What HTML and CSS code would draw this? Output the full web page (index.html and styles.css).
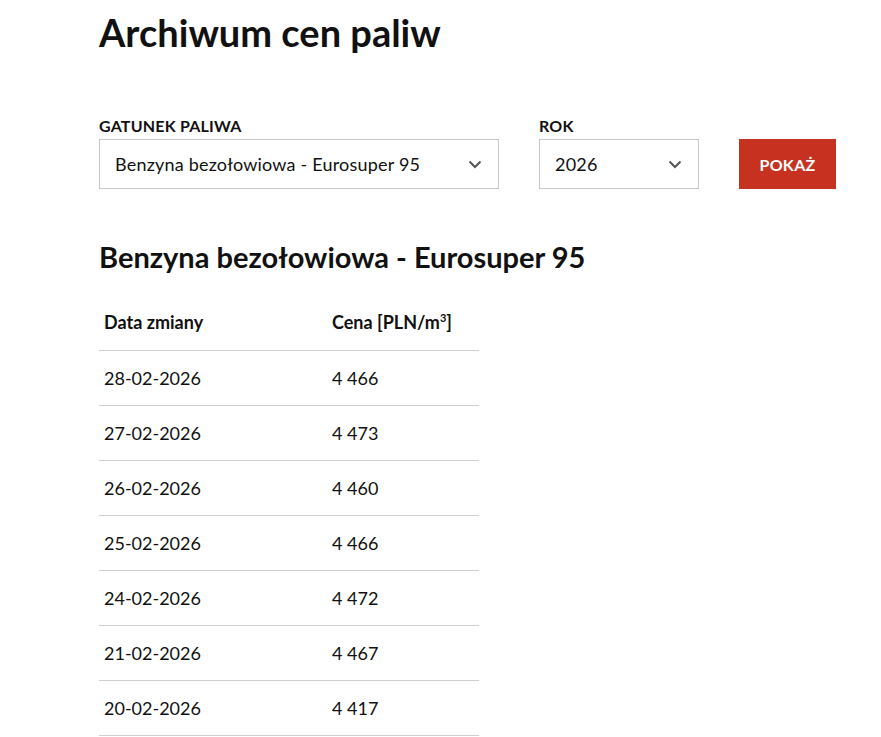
FILE: index.html
```html
<!DOCTYPE html>
<html lang="pl">
<head>
<meta charset="utf-8">
<title>Archiwum cen paliw</title>
<link rel="stylesheet" href="styles.css">
</head>
<body>
<main class="page">
  <h1 class="title">Archiwum cen paliw</h1>
  <form class="filters">
    <div class="field field-fuel">
      <label class="label">Gatunek paliwa</label>
      <div class="select">
        <span class="select-value">Benzyna bezołowiowa - Eurosuper 95</span>
        <svg class="chev" width="14" height="9" viewBox="0 0 14 9"><path d="M1.5 1.5 L7 7 L12.5 1.5" fill="none" stroke="#555" stroke-width="2"/></svg>
      </div>
    </div>
    <div class="field field-year">
      <label class="label">Rok</label>
      <div class="select">
        <span class="select-value">2026</span>
        <svg class="chev" width="14" height="9" viewBox="0 0 14 9"><path d="M1.5 1.5 L7 7 L12.5 1.5" fill="none" stroke="#555" stroke-width="2"/></svg>
      </div>
    </div>
    <button type="button" class="btn">Pokaż</button>
  </form>
  <h2 class="subtitle">Benzyna bezołowiowa - Eurosuper 95</h2>
  <table class="prices">
    <thead>
      <tr><th class="c1">Data zmiany</th><th>Cena [PLN/m<sup>3</sup>]</th></tr>
    </thead>
    <tbody>
      <tr><td class="c1">28-02-2026</td><td>4 466</td></tr>
      <tr><td class="c1">27-02-2026</td><td>4 473</td></tr>
      <tr><td class="c1">26-02-2026</td><td>4 460</td></tr>
      <tr><td class="c1">25-02-2026</td><td>4 466</td></tr>
      <tr><td class="c1">24-02-2026</td><td>4 472</td></tr>
      <tr><td class="c1">21-02-2026</td><td>4 467</td></tr>
      <tr><td class="c1">20-02-2026</td><td>4 417</td></tr>
    </tbody>
  </table>
</main>
</body>
</html>
```
FILE: styles.css
```css
html, body {
  margin: 0;
  padding: 0;
  background: #fff;
}
body {
  font-family: Lato, "Liberation Sans", sans-serif;
  color: #111;
  overflow: hidden;
}
.page {
  padding: 0 0 0 99px;
}
.title {
  margin: 0;
  padding-top: 9px;
  font-size: 38px;
  line-height: 46px;
  font-weight: 700;
}
.filters {
  display: flex;
  align-items: flex-end;
  gap: 40px;
  margin-top: 62px;
}
.field {
  display: flex;
  flex-direction: column;
}
.field-fuel { width: 400px; }
.field-year { width: 160px; }
.label {
  font-size: 16px;
  font-weight: 700;
  text-transform: uppercase;
  line-height: 18px;
  margin-bottom: 4px;
  letter-spacing: 0.2px;
}
.select {
  box-sizing: border-box;
  height: 50px;
  border: 1px solid #c8c8c8;
  display: flex;
  align-items: center;
  justify-content: space-between;
  padding: 0 16px 0 15px;
  font-size: 18px;
  letter-spacing: 0.2px;
}
.chev { display: block; }
.btn {
  width: 97px;
  height: 50px;
  border: 0;
  background: #c6321f;
  color: #fff;
  font-family: inherit;
  font-size: 16px;
  font-weight: 700;
  text-transform: uppercase;
  letter-spacing: 0.3px;
  padding: 0;
}
.subtitle {
  margin: 51px 0 0;
  font-size: 29px;
  line-height: 34px;
  font-weight: 700;
}
.prices {
  margin-top: 20px;
  border-collapse: collapse;
  width: 380px;
  font-size: 18px;
}
.prices th, .prices td {
  text-align: left;
  padding: 0 5px;
  height: 54px;
  border-bottom: 1px solid #cfcfcf;
}
.prices th {
  font-weight: 700;
  height: 56px;
}
.prices td { font-weight: 400; }
.prices .c1 { width: 218px; }
.prices sup {
  font-size: 11px;
  line-height: 0;
  vertical-align: 7px;
}
```
